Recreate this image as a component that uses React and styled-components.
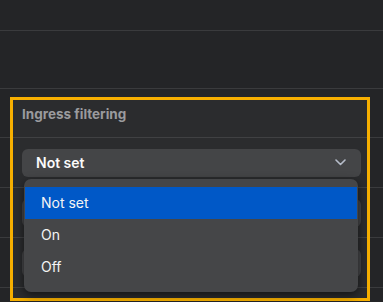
import React from 'react';
import styled, { createGlobalStyle } from 'styled-components';

const GlobalStyle = createGlobalStyle`
  body {
    margin: 0;
    background: #242527;
    font-family: Inter, "Noto Sans", sans-serif;
    -webkit-font-smoothing: antialiased;
  }
`;

const Page = styled.div`
  position: relative;
  width: 383px;
  height: 302px;
  overflow: hidden;
  display: flex;
  flex-direction: column;
`;

const Row = styled.div`
  box-sizing: border-box;
  flex: none;
  height: ${(p) => p.$h}px;
  border-bottom: 1px solid #3a3b3d;
  display: flex;
  align-items: center;
  padding: 0 22px;
`;

const Label = styled.div`
  color: #97989b;
  font-size: 13.5px;
  font-weight: 700;
  padding-top: 2px;
`;

const SelectWrap = styled.div`
  position: relative;
  flex: 1;
`;

const SelectButton = styled.div`
  box-sizing: border-box;
  height: 28px;
  border-radius: 6px;
  background: #444547;
  display: flex;
  align-items: center;
  justify-content: space-between;
  padding: 0 15px 0 14px;
  color: #fbfbfb;
  font-size: 14px;
  font-weight: 600;
`;

const Menu = styled.div`
  position: absolute;
  top: 30px;
  left: 2px;
  right: 3px;
  z-index: 5;
  padding: 8px 1px 9px;
  background: #454648;
  border-radius: 7px;
  box-shadow: 0 3px 10px rgba(0, 0, 0, 0.55);
`;

const MenuItem = styled.div`
  height: 32px;
  display: flex;
  align-items: center;
  padding-left: 16px;
  color: #f4f4f4;
  font-size: 14px;
  background: ${(p) => (p.$active ? '#0058c7' : 'transparent')};
`;

// highlight outline drawn over the settings group
const Highlight = styled.div`
  position: absolute;
  left: 10px;
  top: 97px;
  width: 360px;
  height: 204px;
  box-sizing: border-box;
  border: 3px solid #f6af00;
  background: rgba(255, 255, 255, 0.035);
  pointer-events: none;
`;

const Chevron = () => (
  <svg width="11" height="7" viewBox="0 0 11 7" fill="none">
    <path d="M1 1l4.5 4.5L10 1" stroke="#b6bdca" strokeWidth="1.6" strokeLinecap="round" strokeLinejoin="round" />
  </svg>
);

const options = ['Not set', 'On', 'Off'];

export default function App() {
  return (
    <>
      <GlobalStyle />
      <Page>
        <Row $h={31} />
        <Row $h={58} />
        <Highlight />
        <Row $h={49}>
          <Label>Ingress filtering</Label>
        </Row>
        <Row $h={50}>
          <SelectWrap>
            <SelectButton>
              Not set
              <Chevron />
            </SelectButton>
            <Menu>
              {options.map((o, i) => (
                <MenuItem key={o} $active={i === 0}>
                  {o}
                </MenuItem>
              ))}
            </Menu>
          </SelectWrap>
        </Row>
        {/* further selects, covered by the open menu */}
        <Row $h={50}>
          <SelectWrap>
            <SelectButton />
          </SelectWrap>
        </Row>
        <Row $h={50}>
          <SelectWrap>
            <SelectButton />
          </SelectWrap>
        </Row>
        <Row $h={50} />
      </Page>
    </>
  );
}
